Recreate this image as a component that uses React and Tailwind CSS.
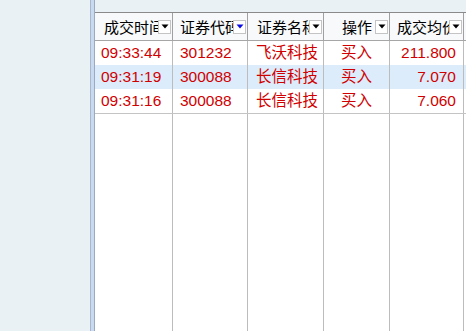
import React from "react";

const cols = [
  { title: "成交时间", w: "w-[78px]", hp: "pl-[9px]", align: "text-left pl-[6px]" },
  { title: "证券代码", w: "w-[75px]", hp: "pl-[7px]", align: "text-left pl-[7px]", sorted: true },
  { title: "证券名称", w: "w-[76px]", hp: "pl-[9px]", align: "text-left pl-[8px]" },
  { title: "操作", w: "w-[66px]", hp: "pl-[18px]", align: "text-center" },
  { title: "成交均价", w: "w-[74px]", hp: "pl-[7px]", align: "text-right pr-[7px]" },
];

const rows = [
  ["09:33:44", "301232", "飞沃科技", "买入", "211.800"],
  ["09:31:19", "300088", "长信科技", "买入", "7.070"],
  ["09:31:16", "300088", "长信科技", "买入", "7.060"],
];

const font = { fontFamily: '"Liberation Sans", "Noto Sans CJK SC", sans-serif' };

const DropButton = ({ blue }) => (
  <div className="w-[13px] h-[14px] shrink-0 bg-white border border-[#c4c4c4] flex items-center justify-center mr-[1px]">
    <svg width="8" height="5" viewBox="0 0 8 5">
      <path d="M0.5 0.5h7L4 4.5z" fill={blue ? "#0a0ae6" : "#000"} />
    </svg>
  </div>
);

export default function App() {
  return (
    <div className="w-[466px] h-[331px] flex bg-[#e9f1f5] overflow-hidden text-[15px]" style={font}>
      <div className="w-[90px] shrink-0" />
      <div className="w-[5px] shrink-0 bg-[#c8daf0] border-l border-r border-l-[#a7b8cc] border-r-[#9aabbf]" />

      <div className="flex-1 flex flex-col min-w-0">
        <div className="h-[12px] shrink-0" />
        <div className="flex-1 flex flex-col bg-white border-t border-[#8a8a8a]">
          {/* header */}
          <div className="h-[28px] shrink-0 flex bg-[#f7f9fb] border-b border-[#a6a6a6]">
            {cols.map((c) => (
              <div
                key={c.title}
                className={`${c.w} shrink-0 flex items-center border-r border-[#a0a0a0] ${c.hp}`}
              >
                <div className="flex-1 overflow-hidden whitespace-nowrap text-black pt-[2px] leading-none">
                  {c.title}
                </div>
                <DropButton blue={c.sorted} />
              </div>
            ))}
            <div className="flex-1" />
          </div>

          {/* rows */}
          {rows.map((r, i) => (
            <div
              key={i}
              className={`h-[24px] shrink-0 flex ${i === 1 ? "bg-[#dcecfb]" : "bg-white"} ${
                i === rows.length - 1 ? "h-[25px] border-b border-[#c4c4c4]" : ""
              }`}
            >
              {r.map((v, j) => (
                <div
                  key={j}
                  className={`${cols[j].w} shrink-0 flex items-center border-r border-[#bcbcbc] text-[#d00000] text-[15.5px] whitespace-nowrap overflow-hidden`}
                >
                  <div className={`w-full ${cols[j].align}`}>{v}</div>
                </div>
              ))}
              <div className="flex-1" />
            </div>
          ))}

          {/* empty area */}
          <div className="flex-1 flex">
            {cols.map((c) => (
              <div key={c.title} className={`${c.w} shrink-0 border-r border-[#bcbcbc]`} />
            ))}
            <div className="flex-1" />
          </div>
        </div>
      </div>
    </div>
  );
}
